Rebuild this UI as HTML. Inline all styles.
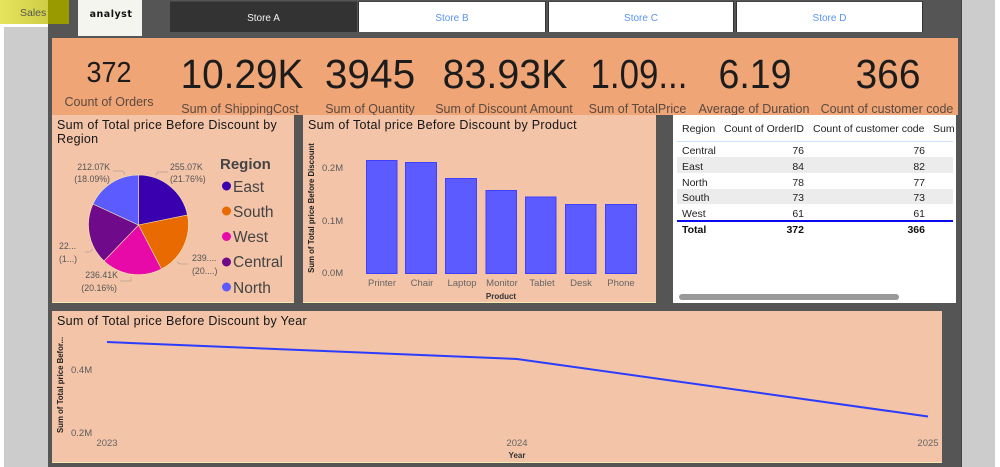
<!DOCTYPE html>
<html><head><meta charset="utf-8">
<style>
html,body{margin:0;padding:0;background:#fff}
#p{position:relative;width:1000px;height:467px;overflow:hidden;background:#fff;font-family:"Liberation Sans",sans-serif}
#p div{position:absolute;white-space:nowrap}
.st{top:1px;height:31px;line-height:33px;text-align:center;font-size:10px;color:#5b93f5;background:#fff;box-sizing:border-box;border-top:1px solid #444;border-left:1px solid #333;border-right:1px solid #333}
.v{top:52px;width:160px;font-size:41px;line-height:44px;color:#1c1c1c;text-align:center}
.l{top:101px;font-size:12.5px;line-height:16px;color:#5a4a40;text-align:center}
.pn{background:#f3c4a8;box-sizing:border-box;border-bottom:1px solid #f5e8b0}
.t{font-size:12.5px;line-height:15px;color:#151515;letter-spacing:.3px}
.d{font-size:8.8px;line-height:12px;color:#555;text-align:center}
.lg{left:233px;font-size:15.5px;line-height:18px;color:#444}
.ax{font-size:9.5px;line-height:11px;color:#5c5c5c}
.c{font-size:9.5px;line-height:12px;color:#666;text-align:center}
.tb{font-size:10.5px;line-height:14px;color:#222}
.r{text-align:right}
</style></head><body><div id="p">
<div style="left:4px;top:27px;width:44px;height:440px;background:#ccc"></div>
<div style="left:48px;top:0;width:914px;height:467px;background:#555"></div>
<div style="left:961px;top:0;width:1px;height:467px;background:#444"></div>
<div style="left:962px;top:0;width:33px;height:467px;background:#ccc"></div>
<div style="left:0;top:0;width:69px;height:24px;background:linear-gradient(90deg,#e6e35c,#cfcd45 48px,#999900 48px)"></div>
<div style="left:20px;top:6px;font-size:10.5px;line-height:14px;color:#555">Sales</div>
<div style="left:78px;top:0;width:64px;height:36px;background:#f5f5ef"></div>
<div style="left:86px;top:9px;width:50px;text-align:center;font-size:9.5px;line-height:12px;font-weight:bold;letter-spacing:.5px;color:#111;font-family:'DejaVu Sans',sans-serif">analyst</div>
<div class="st" style="left:170px;width:187px;background:#333;color:#f2f2f2">Store A</div>
<div class="st" style="left:358px;width:188px">Store B</div>
<div class="st" style="left:548px;width:186px">Store C</div>
<div class="st" style="left:736px;width:187px">Store D</div>

<div style="left:52px;top:38px;width:906px;height:77px;background:#f0a577"></div>
<div class="v" style="left:60px;width:98px;top:56px;font-size:29px;line-height:34px;transform:scaleX(.93)">372</div>
<div class="l" style="left:60px;width:98px;top:94px">Count of Orders</div>
<div class="v" style="left:161.500px;transform:scaleX(.945)">10.29K</div>
<div class="l" style="left:170px;width:140px">Sum of ShippingCost</div>
<div class="v" style="left:290px;transform:scaleX(.99)">3945</div>
<div class="l" style="left:320px;width:100px">Sum of Quantity</div>
<div class="v" style="left:424.500px;transform:scaleX(.96)">83.93K</div>
<div class="l" style="left:429px;width:150px">Sum of Discount Amount</div>
<div class="v" style="left:559px;transform:scaleX(.85)">1.09...</div>
<div class="l" style="left:586px;width:103px">Sum of TotalPrice</div>
<div class="v" style="left:675px;transform:scaleX(.915)">6.19</div>
<div class="l" style="left:696px;width:116px">Average of Duration</div>
<div class="v" style="left:807.500px;transform:scaleX(.95)">366</div>
<div class="l" style="left:816px;width:142px">Count of customer code</div>

<div class="pn" style="left:52px;top:115px;width:242px;height:188px"></div>
<div class="t" style="left:57px;top:118px">Sum of Total price Before Discount by</div>
<div class="t" style="left:57px;top:132px">Region</div>
<svg style="position:absolute;left:0;top:0" width="1000" height="467" viewBox="0 0 1000 467">
<g stroke="#f5e8b0" stroke-width=".6">
<path d="M138.500 225V175A50 50 0 0 1 187.500 215Z" fill="#3a00b0"/>
<path d="M138.500 225L187.500 215A50 50 0 0 1 161.500 269Z" fill="#e86a00"/>
<path d="M138.500 225L161.500 269A50 50 0 0 1 104 261Z" fill="#e80aa8"/>
<path d="M138.500 225L104 261A50 50 0 0 1 93 204Z" fill="#6f0a8a"/>
<path d="M138.500 225L93 204A50 50 0 0 1 138.500 175Z" fill="#5b5bff"/>
</g>
<g fill="none" stroke="#b8a090" stroke-width=".8">
<path d="M156 175L158 172H168"/><path d="M125 175L123 171H113"/><path d="M177 262L180 264H188"/><path d="M131 277V281H120"/><path d="M93 249L90 252H85"/>
</g>
<circle cx="226.500" cy="186" r="4.500" fill="#3a00b0"/><circle cx="226.500" cy="211" r="4.500" fill="#e86a00"/><circle cx="226.500" cy="236.500" r="4.500" fill="#e80aa8"/><circle cx="226.500" cy="262" r="4.500" fill="#6f0a8a"/><circle cx="226.500" cy="287" r="4.500" fill="#5b5bff"/>
</svg>
<div class="d" style="left:170px;top:161px">255.07K</div>
<div class="d" style="left:170px;top:173px">(21.76%)</div>
<div class="d" style="left:60px;top:161px;width:50px;text-align:right">212.07K</div>
<div class="d" style="left:60px;top:173px;width:50px;text-align:right">(18.09%)</div>
<div class="d" style="left:192px;top:252px">239....</div>
<div class="d" style="left:192px;top:265px">(20....)</div>
<div class="d" style="left:68px;top:269px;width:50px;text-align:right">236.41K</div>
<div class="d" style="left:67px;top:282px;width:50px;text-align:right">(20.16%)</div>
<div class="d" style="left:59px;top:240px">22...</div>
<div class="d" style="left:59px;top:253px">(1...)</div>
<div style="left:220px;top:156px;font-size:15px;line-height:18px;font-weight:bold;color:#444">Region</div>
<div class="lg" style="top:179px">East</div>
<div class="lg" style="top:204px">South</div>
<div class="lg" style="top:229px">West</div>
<div class="lg" style="top:254px">Central</div>
<div class="lg" style="top:280px">North</div>

<div class="pn" style="left:303px;top:115px;width:353px;height:188px"></div>
<div class="t" style="left:308px;top:118px">Sum of Total price Before Discount by Product</div>
<svg style="position:absolute;left:0;top:0" width="1000" height="467" viewBox="0 0 1000 467">
<g stroke="#e8bca0" stroke-width=".6" stroke-dasharray="1 2"><path d="M352 169H650M352 221H650M352 273H650"/></g>
<g fill="#5b5bff" stroke="#3f3fff" stroke-width="1">
<rect x="366.500" y="160.500" width="30.500" height="113"/>
<rect x="405.500" y="162.500" width="31" height="111"/>
<rect x="445.500" y="178.500" width="31" height="95"/>
<rect x="486" y="190.500" width="30.500" height="83"/>
<rect x="525.500" y="197" width="30.500" height="76.500"/>
<rect x="565.500" y="204.500" width="30.500" height="69"/>
<rect x="605.500" y="204.500" width="31" height="69"/>
</g>
</svg>
<div class="ax" style="left:322px;top:163px">0.2M</div>
<div class="ax" style="left:322px;top:216px">0.1M</div>
<div class="ax" style="left:322px;top:268px">0.0M</div>
<div class="c" style="left:362px;top:278px;width:40px">Printer</div>
<div class="c" style="left:402px;top:278px;width:40px">Chair</div>
<div class="c" style="left:442px;top:278px;width:40px">Laptop</div>
<div class="c" style="left:482px;top:278px;width:40px">Monitor</div>
<div class="c" style="left:522px;top:278px;width:40px">Tablet</div>
<div class="c" style="left:561px;top:278px;width:40px">Desk</div>
<div class="c" style="left:601px;top:278px;width:40px">Phone</div>
<div style="left:481px;top:291px;width:40px;text-align:center;font-size:8px;line-height:11px;font-weight:bold;color:#333">Product</div>
<div style="left:312px;top:208px;width:0;height:0"><div style="left:-70px;top:-6px;width:140px;text-align:center;font-size:7.8px;line-height:12px;font-weight:bold;color:#222;transform:rotate(-90deg)">Sum of Total price Before Discount</div></div>

<div style="left:673px;top:115px;width:283px;height:188px;background:#fff"></div>
<div style="left:677px;top:157px;width:276px;height:16px;background:#ececec"></div>
<div style="left:677px;top:189px;width:276px;height:15px;background:#ececec"></div>
<div style="left:677px;top:141px;width:276px;height:1px;background:#cfe0fb"></div>
<div style="left:677px;top:219.500px;width:276px;height:2px;background:#0a0aee"></div>
<div class="tb" style="left:682px;top:122px">Region</div>
<div class="tb" style="left:724px;top:122px">Count of OrderID</div>
<div class="tb" style="left:813px;top:122px">Count of customer code</div>
<div class="tb" style="left:933px;top:122px">Sum</div>
<div class="tb" style="left:682px;top:144px">Central</div><div class="tb r" style="left:759px;top:144px;width:45px">76</div><div class="tb r" style="left:880px;top:144px;width:45px">76</div>
<div class="tb" style="left:682px;top:160px">East</div><div class="tb r" style="left:759px;top:160px;width:45px">84</div><div class="tb r" style="left:880px;top:160px;width:45px">82</div>
<div class="tb" style="left:682px;top:176px">North</div><div class="tb r" style="left:759px;top:176px;width:45px">78</div><div class="tb r" style="left:880px;top:176px;width:45px">77</div>
<div class="tb" style="left:682px;top:191px">South</div><div class="tb r" style="left:759px;top:191px;width:45px">73</div><div class="tb r" style="left:880px;top:191px;width:45px">73</div>
<div class="tb" style="left:682px;top:207px">West</div><div class="tb r" style="left:759px;top:207px;width:45px">61</div><div class="tb r" style="left:880px;top:207px;width:45px">61</div>
<div class="tb" style="left:682px;top:223px;font-weight:bold;color:#111">Total</div><div class="tb r" style="left:759px;top:223px;width:45px;font-weight:bold;color:#111">372</div><div class="tb r" style="left:880px;top:223px;width:45px;font-weight:bold;color:#111">366</div>
<div style="left:679px;top:294px;width:220px;height:6px;border-radius:3px;background:#999"></div>

<div class="pn" style="left:52px;top:311px;width:890px;height:152px"></div>
<div class="t" style="left:57px;top:314px">Sum of Total price Before Discount by Year</div>
<svg style="position:absolute;left:0;top:0" width="1000" height="467" viewBox="0 0 1000 467">
<g stroke="#e8bca0" stroke-width=".6" stroke-dasharray="1 2" fill="none"><path d="M107 370H928M107 433H928M107 340V433M517 340V433M928 340V433"/></g>
<path d="M107 342L517 359L928 416.500" fill="none" stroke="#2b3cff" stroke-width="2"/>
</svg>
<div class="ax" style="left:71px;top:365px">0.4M</div>
<div class="ax" style="left:71px;top:428px">0.2M</div>
<div class="c" style="left:87px;top:438px;width:40px">2023</div>
<div class="c" style="left:497px;top:438px;width:40px">2024</div>
<div class="c" style="left:908px;top:438px;width:40px">2025</div>
<div style="left:497px;top:450px;width:40px;text-align:center;font-size:8px;line-height:11px;font-weight:bold;color:#333">Year</div>
<div style="left:61px;top:385px;width:0;height:0"><div style="left:-50px;top:-6px;width:100px;text-align:center;font-size:7.8px;line-height:12px;font-weight:bold;color:#222;transform:rotate(-90deg)">Sum of Total price Befor...</div></div>
</div></body></html>
